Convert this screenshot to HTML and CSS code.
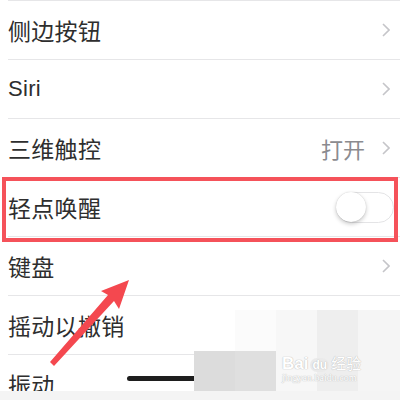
FILE: index.html
```html
<!DOCTYPE html>
<html lang="zh">
<head>
<meta charset="UTF-8">
<title>辅助功能 - 触控</title>
<link rel="stylesheet" href="styles.css">
</head>
<body>

<ul class="settings">
<li class="row"><span class="label">侧边按钮</span><span class="chev"><svg width="8" height="14" viewBox="0 0 8 14"><polyline points="1,1 7,7 1,13" /></svg></span></li>
<li class="row"><span class="label latin">Siri</span><span class="chev"><svg width="8" height="14" viewBox="0 0 8 14"><polyline points="1,1 7,7 1,13" /></svg></span></li>
<li class="row"><span class="label">三维触控</span><span class="value">打开</span><span class="chev"><svg width="8" height="14" viewBox="0 0 8 14"><polyline points="1,1 7,7 1,13" /></svg></span></li>
<li class="row"><span class="label">轻点唤醒</span><span class="toggle"><span class="knob"></span></span></li>
<li class="row"><span class="label">键盘</span><span class="chev"><svg width="8" height="14" viewBox="0 0 8 14"><polyline points="1,1 7,7 1,13" /></svg></span></li>
<li class="row"><span class="label">摇动以撤销</span></li>
<li class="row"><span class="label">振动</span></li>
</ul>

<!-- annotation on top of the screenshot -->
<div class="highlight"></div>
<svg class="arrow" width="400" height="400" viewBox="0 0 400 400">
<polygon points="129,280 119,309 114,301 54,366 50,362 108,295 101,291" />
</svg>

<div class="home-bar"></div>

<div class="watermark">
<div class="wm-block b1"></div>
<div class="wm-block b2"></div>
<div class="wm-block b3"></div>
<div class="wm-block b4"></div>
<div class="wm-block b5"></div>
<div class="wm-block b6"></div>
<div class="wm-logo">
<span class="wm-bai">Bai</span><span class="wm-du">du</span><span class="wm-jy">经验</span>
<div class="wm-url">jingyan.baidu.com</div>
</div>
</div>
<div class="bottom-strip"></div>

</body>
</html>
```

FILE: styles.css
```css
/* Reset */
* {
margin: 0;
padding: 0;
box-sizing: border-box;
}

body {
width: 400px;
height: 400px;
overflow: hidden;
background-color: #ffffff;
font-family: "Liberation Sans", "Noto Sans CJK SC", sans-serif;
position: relative;
}

/* Settings list */
.settings {
list-style: none;
padding-left: 8px;
}

.row {
height: 59px;
border-top: 1px solid #e6e6e8;
display: flex;
align-items: center;
padding-right: 10px;
}

.label {
flex: 1;
font-family: "Noto Sans CJK SC", sans-serif;
font-size: 23px;
color: #2e2e2e;
letter-spacing: 0.3px;
}

.label.latin {
font-family: "Liberation Sans", "Noto Sans CJK SC", sans-serif;
font-size: 22px;
}

.value {
font-family: "Noto Sans CJK SC", sans-serif;
font-size: 22px;
color: #8b8b8f;
margin-right: 17px;
}

.chev svg {
display: block;
}

.chev polyline {
fill: none;
stroke: #c5c5c9;
stroke-width: 1.6;
}

/* Switch (off) */
.toggle {
width: 58px;
height: 31px;
margin-right: -4px;
border: 1.5px solid #e4e4e6;
border-radius: 16px;
background-color: #ffffff;
position: relative;
}

.knob {
position: absolute;
left: -1px;
top: -1px;
width: 30px;
height: 30px;
border-radius: 50%;
background-color: #ffffff;
box-shadow: 0 2px 4px rgba(0, 0, 0, 0.22), 0 0 1px rgba(0, 0, 0, 0.2);
}

/* Annotations */
.highlight {
position: absolute;
left: 2px;
top: 177px;
width: 396px;
height: 65px;
border: 4px solid #f5525a;
}

.arrow {
position: absolute;
left: 0;
top: 0;
}

.arrow polygon {
fill: #f4484f;
}

.home-bar {
position: absolute;
left: 127px;
top: 376px;
width: 70px;
height: 5px;
border-radius: 3px;
background-color: #1e1e1e;
}

/* Baidu watermark */
.watermark {
position: absolute;
left: 194px;
top: 310px;
width: 206px;
height: 82px;
}

.wm-block {
position: absolute;
}

.b1 { left: 0; top: 41px; width: 41px; height: 41px; background-color: #dcdcdc; }
.b2 { left: 41px; top: 41px; width: 41px; height: 41px; background-color: #dfdfdf; }
.b3 { left: 41px; top: 0; width: 41px; height: 41px; background-color: #fbfbfb; }
.b4 { left: 82px; top: 0; width: 41px; height: 82px; background-color: #f7f7f7; }
.b5 { left: 123px; top: 0; width: 41px; height: 82px; background-color: #eeeeee; }
.b6 { left: 164px; top: 0; width: 42px; height: 82px; background-color: #f5f5f5; }

.wm-logo {
position: absolute;
left: 88px;
top: 42px;
color: #ffffff;
text-shadow: 0 0 1px #bdbdbd, 0 0 1px #bdbdbd;
white-space: nowrap;
}

.wm-bai {
font-family: "Liberation Sans", sans-serif;
font-weight: bold;
font-size: 17px;
}

.wm-du {
display: inline-block;
margin: 0 2px;
padding: 0 2px;
font-family: "Liberation Sans", sans-serif;
font-weight: bold;
font-size: 12px;
border-radius: 8px;
background-color: #eaeaea;
}

.wm-jy {
font-family: "Noto Sans CJK SC", sans-serif;
font-size: 15px;
}

.wm-url {
font-family: "Liberation Serif", serif;
font-size: 10px;
margin-top: -2px;
}

.bottom-strip {
position: absolute;
left: 0;
top: 391px;
width: 400px;
height: 9px;
background-color: #f4f4f4;
}
```
